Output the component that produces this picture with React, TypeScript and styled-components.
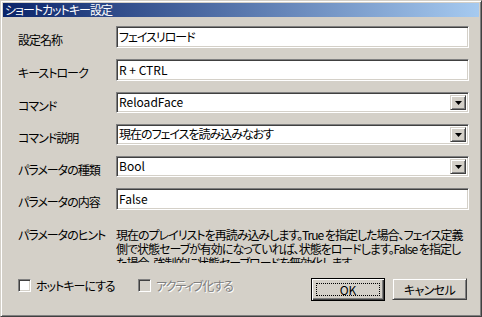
import React from 'react';
import styled, { createGlobalStyle } from 'styled-components';

const Global = createGlobalStyle`
  html, body { margin: 0; padding: 0; background: #d4d0c8; }
  * { box-sizing: border-box; }
  body {
    font-family: "Noto Sans CJK JP", "Liberation Sans", sans-serif;
    font-size: 12px;
    font-feature-settings: "palt";
    letter-spacing: -1px;
    color: #000;
  }
`;

const Window = styled.div`
  width: 482px;
  height: 317px;
  background: #d4d0c8;
  border: 1px solid;
  border-color: #d4d0c8 #404040 #404040 #d4d0c8;
  box-shadow: inset 1px 1px #fff, inset -1px -1px #808080;
  padding: 2px;
  display: flex;
  flex-direction: column;
  overflow: hidden;
`;

const TitleBar = styled.div`
  height: 14px;
  line-height: 14px;
  padding-left: 2px;
  color: #fff;
  letter-spacing: -1px;
  white-space: nowrap;
  background: linear-gradient(to right, #0a246a, #a6caf0);
`;

const Body = styled.div`
  padding: 9px 10px 0 15px;
  display: flex;
  flex-direction: column;
`;

const Form = styled.div`
  display: grid;
  grid-template-columns: 98px 1fr;
  row-gap: 11px;
`;

const Label = styled.div<{ $top?: number }>`
  padding-top: ${p => p.$top ?? 7}px;
  line-height: 14px;
  white-space: nowrap;
`;

const Sunken = styled.div<{ $h: number; $latin?: boolean }>`
  position: relative;
  height: ${p => p.$h}px;
  background: #fff;
  border: 1px solid;
  border-color: #808080 #fff #fff #808080;
  box-shadow: inset 1px 1px #404040, inset -1px -1px #d4d0c8;
  padding: 0 20px 0 2px;
  line-height: ${p => p.$h - 3}px;
  letter-spacing: ${p => (p.$latin ? '0' : '-1px')};
  white-space: nowrap;
  overflow: hidden;
`;

const DropButton = styled.div`
  position: absolute;
  top: 2px;
  right: 2px;
  width: 16px;
  height: 15px;
  background: #d4d0c8;
  border: 1px solid;
  border-color: #d4d0c8 #404040 #404040 #d4d0c8;
  box-shadow: inset 1px 1px #fff, inset -1px -1px #808080;
  display: flex;
  align-items: center;
  justify-content: center;
`;

const HintRow = styled.div`
  margin-top: 18px;
  display: grid;
  grid-template-columns: 98px 1fr;
`;

const HintText = styled.div`
  height: 35px;
  line-height: 14px;
  overflow: hidden;
  white-space: nowrap;
`;

const Footer = styled.div`
  margin-top: 15px;
  padding-right: 2px;
  display: flex;
  align-items: flex-start;
`;

const Check = styled.label<{ $disabled?: boolean }>`
  width: 120px;
  margin-top: 1px;
  display: flex;
  align-items: center;
  gap: 5px;
  line-height: 13px;
  white-space: nowrap;
  color: ${p => (p.$disabled ? '#808080' : '#000')};
  text-shadow: ${p => (p.$disabled ? '1px 1px #fff' : 'none')};
`;

const Box = styled.span<{ $disabled?: boolean }>`
  width: 13px;
  height: 13px;
  flex: none;
  background: ${p => (p.$disabled ? '#d4d0c8' : '#fff')};
  border: 1px solid;
  border-color: #808080 #fff #fff #808080;
  box-shadow: inset 1px 1px #404040, inset -1px -1px #d4d0c8;
`;

const Buttons = styled.div`
  margin-left: auto;
  display: flex;
  gap: 7px;
`;

const Button = styled.button<{ $default?: boolean; $w: number }>`
  width: ${p => p.$w}px;
  height: ${p => (p.$default ? 23 : 22)}px;
  padding: 0;
  font: inherit;
  letter-spacing: -0.6px;
  color: #000;
  background: #d4d0c8;
  border: 1px solid;
  border-color: ${p => (p.$default ? '#000' : '#d4d0c8 #404040 #404040 #d4d0c8')};
  box-shadow: ${p =>
    p.$default
      ? 'inset 1px 1px #fff, inset -1px -1px #404040, inset -2px -2px #808080'
      : 'inset 1px 1px #fff, inset -1px -1px #808080'};
  display: flex;
  align-items: center;
  justify-content: center;
`;

const Focus = styled.span`
  width: calc(100% - 8px);
  height: calc(100% - 8px);
  border: 1px dotted #000;
  display: flex;
  align-items: center;
  justify-content: center;
  line-height: 12px;
  letter-spacing: 0;
`;

const Arrow = () => (
  <svg width="7" height="4" viewBox="0 0 7 4">
    <polygon points="0,0 7,0 3.5,4" fill="#000" />
  </svg>
);

type Row = { label: string; value: string; combo?: boolean; latin?: boolean; h: number };

const rows: Row[] = [
  { label: '設定名称', value: 'フェイスリロード', h: 22 },
  { label: 'キーストローク', value: 'R + CTRL', latin: true, h: 22 },
  { label: 'コマンド', value: 'ReloadFace', combo: true, latin: true, h: 21 },
  { label: 'コマンド説明', value: '現在のフェイスを読み込みなおす', combo: true, h: 21 },
  { label: 'パラメータの種類', value: 'Bool', combo: true, latin: true, h: 21 },
  { label: 'パラメータの内容', value: 'False', latin: true, h: 22 },
];

export default function App() {
  return (
    <>
      <Global />
      <Window>
        <TitleBar>ショートカットキー設定</TitleBar>
        <Body>
          <Form>
            {rows.map(r => (
              <React.Fragment key={r.label}>
                <Label>{r.label}</Label>
                <Sunken $h={r.h} $latin={r.latin}>
                  {r.value}
                  {r.combo && (
                    <DropButton>
                      <Arrow />
                    </DropButton>
                  )}
                </Sunken>
              </React.Fragment>
            ))}
          </Form>
          <HintRow>
            <Label $top={0}>パラメータのヒント</Label>
            <HintText>
              現在のプレイリストを再読み込みします。True を指定した場合、フェイス定義
              <br />
              側で状態セーブが有効になっていれば、状態をロードします。False を指定し
              <br />
              た場合、強制的に状態セーブロードを無効化します
            </HintText>
          </HintRow>
          <Footer>
            <Check>
              <Box />
              ホットキーにする
            </Check>
            <Check $disabled>
              <Box $disabled />
              アクティブ化する
            </Check>
            <Buttons>
              <Button $default $w={74}>
                <Focus>OK</Focus>
              </Button>
              <Button $w={75}>キャンセル</Button>
            </Buttons>
          </Footer>
        </Body>
      </Window>
    </>
  );
}
